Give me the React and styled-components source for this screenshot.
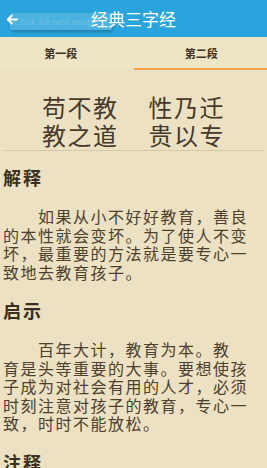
import React from 'react';
import styled, { createGlobalStyle } from 'styled-components';

const GlobalStyle = createGlobalStyle`
  html, body {
    margin: 0;
    padding: 0;
    background: #ece1c2;
    overflow: hidden;
  }
  * { box-sizing: border-box; }
`;

const Page = styled.div`
  width: 267px;
  height: 468px;
  overflow: hidden;
  background: #ece1c2;
  font-family: "Noto Sans CJK SC", "Noto Sans", sans-serif;
`;

const Header = styled.header`
  position: relative;
  height: 37px;
  background: #2aa4dc;
  display: flex;
  align-items: center;
  padding: 0 0 0 6px;
  gap: 73px;
`;

const BackButton = styled.button`
  position: relative;
  z-index: 2;
  border: 0;
  background: none;
  padding: 0;
  width: 12px;
  height: 11px;
  display: flex;
  margin-top: 1px;
`;

const Title = styled.h1`
  position: relative;
  z-index: 2;
  margin: 0;
  color: #ffffff;
  font-size: 17px;
  font-weight: 400;
  line-height: 20px;
`;

const Toast = styled.div`
  position: absolute;
  z-index: 1;
  left: 10px;
  top: 13px;
  width: 102px;
  height: 17px;
  border-radius: 2px;
  background: #4cb2e0;
  box-shadow: 1px 2px 3px rgba(20, 70, 100, 0.4);
  color: #6fc0e4;
  font-family: "Liberation Serif", serif;
  font-size: 10px;
  line-height: 17px;
  padding-left: 4px;
  white-space: nowrap;
  overflow: hidden;
`;

const Tabs = styled.nav`
  display: grid;
  grid-template-columns: 1fr 1fr;
  height: 33px;
  background: #eee4c6;
`;

const Tab = styled.div`
  display: flex;
  align-items: center;
  justify-content: center;
  padding: ${p => (p.$first ? '0 12px 0 0' : '0 0 0 2px')};
  font-size: 11px;
  font-weight: 700;
  color: #3b3124;
  border-bottom: 2px solid ${p => (p.$active ? '#f0a24c' : 'transparent')};
`;

const Content = styled.main`
  padding: 23px 3px 0;
`;

const Poem = styled.div`
  display: flex;
  flex-direction: column;
  align-items: center;
  padding-bottom: 1px;
  border-bottom: 1px solid #d5c8a4;
`;

const PoemLine = styled.div`
  display: flex;
  gap: 30px;
  font-size: 24px;
  line-height: 28px;
  letter-spacing: 1.5px;
  color: #46392a;
`;

const Heading = styled.h2`
  margin: ${p => (p.$first ? '15px' : '18px')} 0 0;
  font-size: 18px;
  line-height: 22px;
  font-weight: 700;
  letter-spacing: 2px;
  color: #3a2f20;
`;

const Paragraph = styled.p`
  margin: 19px 0 0;
  font-size: 16px;
  line-height: 18.5px;
  letter-spacing: 1.5px;
  text-indent: 35px;
  white-space: pre-line;
  color: #4d402e;
`;

const ArrowIcon = () => (
  <svg width="12" height="11" viewBox="0 0 12 11" fill="none">
    <path d="M11 5.5H1.8M5.8 1.5 1.8 5.5l4 4" stroke="#fff" strokeWidth="1.8" strokeLinecap="round" strokeLinejoin="round" />
  </svg>
);

const sections = [
  {
    title: '解释',
    text: '如果从小不好好教育，善良的本性就会变坏。为了使人不变坏，最重要的方法就是要专心一致地去教育孩子。',
  },
  {
    title: '启示',
    text: '百年大计，教育为本。教\n育是头等重要的大事。要想使孩子成为对社会有用的人才，必须时刻注意对孩子的教育，专心一致，时时不能放松。',
  },
  {
    title: '注释',
    text: '苟：如果，假如。教：教育。性：本性。乃：就。迁：改变，变化。道：方法。贵：重要。专：专心一致。',
  },
];

export default function App() {
  return (
    <Page>
      <GlobalStyle />
      <Header>
        <BackButton aria-label="返回">
          <ArrowIcon />
        </BackButton>
        <Title>经典三字经</Title>
        <Toast>Click for next image</Toast>
      </Header>
      <Tabs>
        <Tab $first>第一段</Tab>
        <Tab $active>第二段</Tab>
      </Tabs>
      <Content>
        <Poem>
          <PoemLine>
            <span>苟不教</span>
            <span>性乃迁</span>
          </PoemLine>
          <PoemLine>
            <span>教之道</span>
            <span>贵以专</span>
          </PoemLine>
        </Poem>
        {sections.map((s, i) => (
          <React.Fragment key={s.title}>
            <Heading $first={i === 0}>{s.title}</Heading>
            <Paragraph>{s.text}</Paragraph>
          </React.Fragment>
        ))}
      </Content>
    </Page>
  );
}
